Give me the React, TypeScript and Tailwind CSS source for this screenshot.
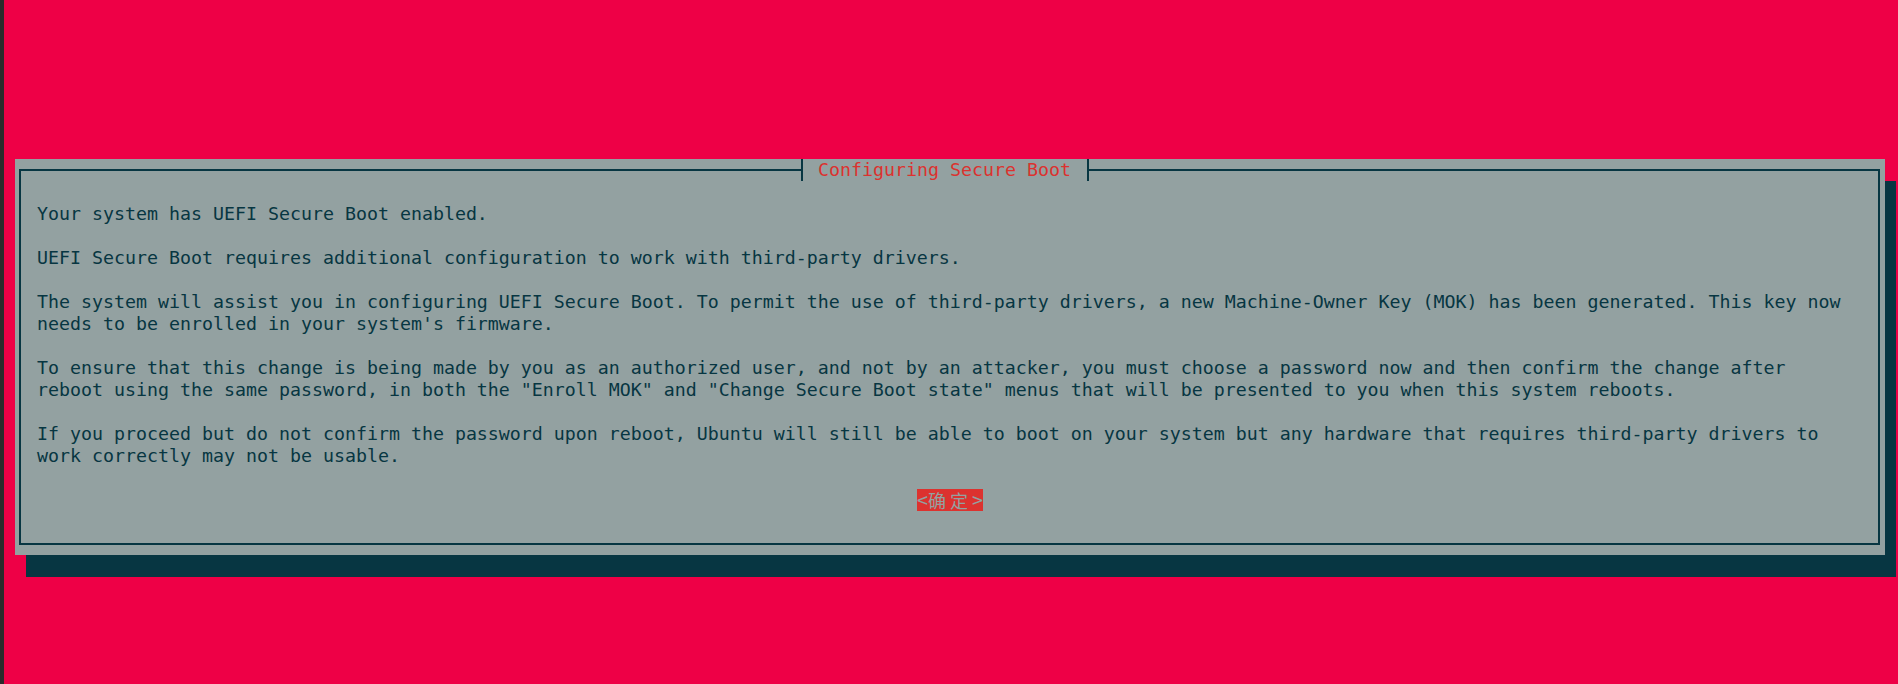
const lines = [
  "",
  "Your system has UEFI Secure Boot enabled.",
  "",
  "UEFI Secure Boot requires additional configuration to work with third-party drivers.",
  "",
  "The system will assist you in configuring UEFI Secure Boot. To permit the use of third-party drivers, a new Machine-Owner Key (MOK) has been generated. This key now",
  "needs to be enrolled in your system's firmware.",
  "",
  "To ensure that this change is being made by you as an authorized user, and not by an attacker, you must choose a password now and then confirm the change after",
  'reboot using the same password, in both the "Enroll MOK" and "Change Secure Boot state" menus that will be presented to you when this system reboots.',
  "",
  "If you proceed but do not confirm the password upon reboot, Ubuntu will still be able to boot on your system but any hardware that requires third-party drivers to",
  "work correctly may not be usable.",
  "",
];

const mono = "font-['DejaVu_Sans_Mono','Liberation_Mono',monospace] text-[18.27px] leading-[22px]";

function Title() {
  return (
    <div className="flex h-[22px] -mt-[12px] pl-[775px]">
      {/* ┤ */}
      <div className="flex h-[22px] w-[11px]">
        <div className="w-[5px]" />
        <div className="w-[2px] bg-[#073642]" />
        <div className="w-[4px] bg-[#93a1a1]" />
      </div>
      <div className={`${mono} bg-[#93a1a1] text-[#dc322f] whitespace-pre`}>
        {" Configuring Secure Boot "}
      </div>
      {/* ├ */}
      <div className="flex h-[22px] w-[11px]">
        <div className="w-[5px] bg-[#93a1a1]" />
        <div className="w-[2px] bg-[#073642]" />
        <div className="w-[4px]" />
      </div>
    </div>
  );
}

function OkButton() {
  return (
    <div className="flex h-[22px] pl-[896px]">
      <div className="flex h-[22px] bg-[#dc322f] text-[#93a1a1]">
        <span className={`${mono} w-[11px]`}>&lt;</span>
        <span className="w-[22px] text-[18px] leading-[22px] font-['Noto_Sans_CJK_SC',sans-serif]">确</span>
        <span className="w-[22px] text-[18px] leading-[22px] font-['Noto_Sans_CJK_SC',sans-serif]">定</span>
        <span className={`${mono} w-[11px]`}>&gt;</span>
      </div>
    </div>
  );
}

export default function App() {
  return (
    <div className="flex h-[684px] w-full bg-[#ee0046]">
      <div className="w-[4px] bg-[#2b2b2b]" />
      <div className="flex-1 pl-[11px] pt-[159px]">
        <div className="flex h-[396px] w-[1870px] flex-col bg-[#93a1a1] pl-[4px] pr-[5px] pt-[10px] pb-[10px] shadow-[11px_22px_0_0_#073642]">
          <div className="flex flex-1 flex-col border-2 border-[#073642]">
            <Title />
            <div className="pl-[16px] text-[#073642]">
              {lines.map((line, i) => (
                <div key={i} className={`${mono} h-[22px] whitespace-pre`}>
                  {line}
                </div>
              ))}
            </div>
            <OkButton />
          </div>
        </div>
      </div>
    </div>
  );
}
